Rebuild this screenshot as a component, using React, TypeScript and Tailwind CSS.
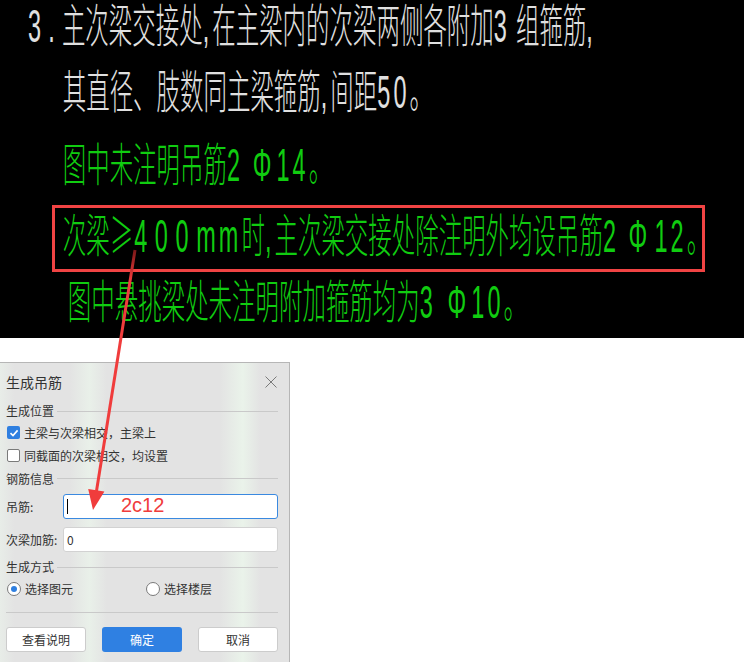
import React from "react";

// CAD drafting fonts have wider digits and punctuation than a CJK face, so ASCII bits get extra tracking
function A({ children, className = "tracking-[6px]" }: { children: React.ReactNode; className?: string }) {
  return <span className={className}>{children}</span>;
}

function CadLine({ className, children }: { className: string; children: React.ReactNode }) {
  return (
    <div className={`h-[52px] leading-[52px] whitespace-nowrap text-[46px] font-[200] ${className}`}>
      {children}
    </div>
  );
}

// the drawing is laid out at full glyph width and squeezed horizontally as a whole
function DrawingPanel() {
  return (
    <div
      className="w-[744px] h-[338px] bg-black overflow-hidden"
      style={{ fontFamily: '"Liberation Sans", "Noto Sans CJK SC", sans-serif' }}
    >
      <div className="w-[1459px] h-[338px] origin-top-left scale-x-[0.51] flex flex-col">
        <CadLine className="ml-[55px] text-[#e0e0e0]">
          <A className="tracking-[14px]">3.</A>主次梁交接处<A>,</A>在主梁内的次梁两侧各附加
          <A className="tracking-[18px]">3</A>组箍筋<A>,</A>
        </CadLine>
        <CadLine className="ml-[123px] mt-[14px] text-[#e0e0e0]">
          其直径、肢数同主梁箍筋<A>,</A>间距<A>50</A>。
        </CadLine>
        <CadLine className="ml-[123px] mt-[21px] text-[#10cc10]">
          图中未注明吊筋<A>2 </A><A className="tracking-[10px]">Φ</A><A>14</A>。
        </CadLine>
        <CadLine className="ml-[123px] mt-[15px] text-[#10cc10]">
          次梁<A className="font-['Noto_Sans_CJK_SC'] tracking-[2px]">≥</A>
          <A className="tracking-[15px]">400</A>
          <A>mm</A>时<A>,</A>主次梁交接处除注明外均设吊筋<A>2 </A>
          <A className="tracking-[14px]">Φ</A><A>12</A>。
        </CadLine>
        <CadLine className="ml-[133px] mt-[18px] text-[#10cc10]">
          图中悬挑梁处未注明附加箍筋均为<A>3</A><A className="tracking-[10px]"> Φ</A><A>10</A>。
        </CadLine>
      </div>
    </div>
  );
}

function SectionHeader({ title, className }: { title: string; className: string }) {
  return (
    <div className={`flex items-center gap-[3px] ${className}`}>
      <span>{title}</span>
      <div className="flex-1 h-px bg-[#c9c9c9]" />
    </div>
  );
}

function CheckRow({ checked, label }: { checked: boolean; label: string }) {
  return (
    <div className="h-[23px] flex items-center gap-[4px] pl-[1px]">
      {checked ? (
        <span className="w-[13px] h-[13px] rounded-[2px] bg-[#2f7fe0] flex items-center justify-center">
          <svg width="10" height="10" viewBox="0 0 10 10">
            <path d="M1.5 5.2 L4 7.6 L8.6 2.4" fill="none" stroke="white" strokeWidth="1.6" />
          </svg>
        </span>
      ) : (
        <span className="w-[13px] h-[13px] rounded-[2px] bg-white border border-[#7a7a7a]" />
      )}
      <span>{label}</span>
    </div>
  );
}

function Radio({ checked, label }: { checked: boolean; label: string }) {
  return (
    <div className="flex items-center gap-[4px]">
      <span className="w-[14px] h-[14px] rounded-full bg-white border border-[#7a7a7a] flex items-center justify-center">
        {checked && <span className="w-[6px] h-[6px] rounded-full bg-[#2f7fe0]" />}
      </span>
      <span>{label}</span>
    </div>
  );
}

function HangerDialog() {
  return (
    <div
      className="w-[290px] h-[300px] border-t border-r border-[#b6b6b6] bg-[linear-gradient(90deg,#e8ede8_0%,#e3e3e3_5%,#e3e3e3_24%,#e9f0e9_31%,#e3e3e3_37%,#e3e3e3_76%,#eaf3ea_84%,#e3e3e3_90%,#e3e3e3_100%)] pl-[6px] pr-[11px] text-[12px] text-[#333333] flex flex-col"
      style={{ fontFamily: '"Noto Sans CJK SC", "Noto Sans", sans-serif' }}
    >
      <div className="h-[38px] flex items-center justify-between">
        <span className="text-[14px]">生成吊筋</span>
        <svg width="12" height="12" viewBox="0 0 12 12" className="mr-[1px]">
          <path d="M0.5 0.5 L11.5 11.5 M11.5 0.5 L0.5 11.5" stroke="#7a7a7a" strokeWidth="1" />
        </svg>
      </div>

      <SectionHeader title="生成位置" className="h-[20px]" />
      <CheckRow checked label="主梁与次梁相交，主梁上" />
      <CheckRow checked={false} label="同截面的次梁相交，均设置" />
      <SectionHeader title="钢筋信息" className="h-[23px]" />

      <div className="mt-[4px] h-[25px] flex items-center">
        <span className="w-[57px]">吊筋:</span>
        <div className="flex-1 h-full bg-white border border-[#3a89e0] rounded-[3px] flex items-center pl-[3px]">
          <span className="w-px h-[15px] bg-black" />
        </div>
      </div>
      <div className="mt-[8px] h-[25px] flex items-center">
        <span className="w-[57px]">次梁加筋:</span>
        <div className="flex-1 h-full bg-white border border-[#d2d2d2] rounded-[3px] flex items-center pl-[3px]">
          0
        </div>
      </div>

      <SectionHeader title="生成方式" className="h-[30px]" />
      <div className="h-[14px] flex items-center pl-[1px]">
        <div className="w-[139px]">
          <Radio checked label="选择图元" />
        </div>
        <Radio checked={false} label="选择楼层" />
      </div>

      <div className="mt-[16px] h-px bg-[#c9c9c9]" />

      <div className="mt-[14px] flex gap-[16px]">
        <button className="w-[80px] h-[25px] rounded-[3px] bg-white border border-[#cccccc] text-[#333333]">
          查看说明
        </button>
        <button className="w-[80px] h-[25px] rounded-[3px] bg-[#2f80e2] text-white">确定</button>
        <button className="w-[80px] h-[25px] rounded-[3px] bg-white border border-[#cccccc] text-[#333333]">
          取消
        </button>
      </div>
    </div>
  );
}

// red markup on top: box, arrow and the note
function Markup() {
  return (
    <>
      <div className="absolute left-[52px] top-[205px] w-[653px] h-[67px] border-[3px] border-[#f04343]" />
      <svg className="absolute left-0 top-0 pointer-events-none" width="756" height="662" viewBox="0 0 756 662">
        <defs>
          <linearGradient id="arrowFade" x1="0" y1="250" x2="0" y2="280" gradientUnits="userSpaceOnUse">
            <stop offset="0" stopColor="#7a1818" />
            <stop offset="1" stopColor="#f03c3c" />
          </linearGradient>
        </defs>
        <line x1="135" y1="250" x2="96.5" y2="491" stroke="url(#arrowFade)" strokeWidth="3" />
        <polygon points="93,510 104.4,491.6 88.2,489" fill="#f03c3c" />
      </svg>
      <span
        className="absolute left-[121px] top-[495px] text-[20px] leading-[20px] text-[#f03c3c]"
        style={{ fontFamily: '"Liberation Sans", Arial, sans-serif' }}
      >
        2c12
      </span>
    </>
  );
}

export default function App() {
  return (
    <div className="relative w-[756px] h-[662px] bg-white overflow-hidden">
      <DrawingPanel />
      <div className="mt-[24px]">
        <HangerDialog />
      </div>
      <Markup />
    </div>
  );
}
